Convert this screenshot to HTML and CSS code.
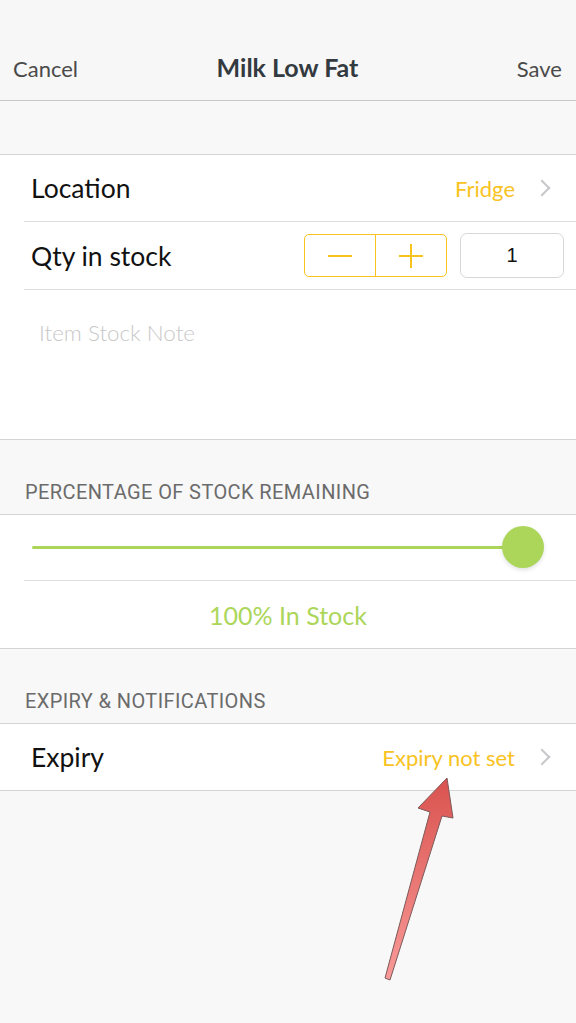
FILE: index.html
```html
<!DOCTYPE html>
<html lang="en">
<head>
  <meta charset="UTF-8" />
  <title>Milk Low Fat</title>
  <link rel="stylesheet" href="styles.css">
</head>
<body>

  <!-- Nav bar -->
  <div class="navbar">
    <span class="nav-btn">Cancel</span>
    <span class="nav-title">Milk Low Fat</span>
    <span class="nav-btn right">Save</span>
  </div>

  <div class="spacer"></div>

  <!-- Stock group -->
  <div class="group">
    <div class="row">
      <span class="label">Location</span>
      <span class="value">Fridge</span>
      <span class="chevron"></span>
    </div>
    <div class="row qty-row">
      <span class="label">Qty in stock</span>
      <div class="stepper">
        <span class="step"><span class="minus"></span></span>
        <span class="step"><span class="plus"></span></span>
      </div>
      <div class="qty-box">1</div>
    </div>
    <div class="note">Item Stock Note</div>
  </div>

  <div class="section-head">PERCENTAGE OF STOCK REMAINING</div>
  <div class="group">
    <div class="row slider-row">
      <div class="track"><span class="thumb"></span></div>
    </div>
    <div class="row stock-row">100% In Stock</div>
  </div>

  <div class="section-head">EXPIRY &amp; NOTIFICATIONS</div>
  <div class="group">
    <div class="row">
      <span class="label">Expiry</span>
      <span class="value">Expiry not set</span>
      <span class="chevron"></span>
    </div>
  </div>

  <!-- annotation arrow -->
  <svg class="arrow" width="576" height="1023" viewBox="0 0 576 1023">
    <defs>
      <linearGradient id="arrowFill" x1="0" y1="1" x2="0" y2="0">
        <stop offset="0" stop-color="#f99a98" />
        <stop offset="1" stop-color="#d9534f" />
      </linearGradient>
    </defs>
    <polygon points="447,778 453,818 442,816 390,980 385,978 430,812 418,808"
      fill="url(#arrowFill)" stroke="#7d5a5a" stroke-width="1" stroke-linejoin="round" />
  </svg>

</body>
</html>
```

FILE: styles.css
```css
body { margin: 0; background: #f8f8f8; font-family: Lato, "Open Sans", sans-serif; color: #1c1c1c; position: relative; min-height: 1023px; }

.navbar { height: 101px; box-sizing: border-box; border-bottom: 1px solid #c8c8c8; display: grid; grid-template-columns: 1fr auto 1fr; align-items: end; padding: 0 14px 18px 13px; background: #f7f7f7; }
.nav-btn { font-size: 22px; color: #4a4a4a; }
.nav-btn.right { text-align: right; }
.nav-title { font-size: 25px; font-weight: bold; color: #333a40; }

.spacer { height: 53px; border-bottom: 1px solid #d4d4d4; }

.group { background: #fff; border-bottom: 1px solid #d4d4d4; padding-left: 24px; }
.row { height: 66px; display: flex; align-items: center; border-bottom: 1px solid #dedede; padding-right: 24px; }
.group .row:last-child { border-bottom: none; }

.label { font-size: 26.5px; flex: 1; color: #111; padding-left: 7px; }
.value { font-size: 22px; color: #f9c31f; margin-right: 21px; }
.chevron { width: 10px; height: 10px; border-top: 2px solid #c7c7cc; border-right: 2px solid #c7c7cc; transform: rotate(45deg); margin-right: 4px; }

.qty-row { height: 67px; padding-right: 12px; }
.stepper { display: flex; width: 143px; height: 43px; border: 1px solid #f9c31f; border-radius: 5px; box-sizing: border-box; }
.step { flex: 1; display: flex; align-items: center; justify-content: center; position: relative; }
.step + .step { border-left: 1px solid #f9c31f; }
.minus, .plus { width: 24px; height: 2px; background: #f9c31f; position: relative; }
.plus::after { content: ""; position: absolute; left: 11px; top: -11px; width: 2px; height: 24px; background: #f9c31f; }
.qty-box { width: 104px; height: 45px; margin-left: 13px; border: 1px solid #d8d8d8; border-radius: 7px; box-sizing: border-box; display: flex; align-items: center; justify-content: center; font-family: "Liberation Sans", Arial, sans-serif; font-size: 20px; color: #111; }

.note { height: 149px; padding: 29px 0 0 15px; box-sizing: border-box; font-size: 22.4px; font-weight: 300; color: #c8c8c8; }

.section-head { height: 75px; box-sizing: border-box; padding: 0 0 10px 25px; display: flex; align-items: flex-end; font-family: Roboto, "Liberation Sans", sans-serif; font-size: 20px; letter-spacing: 0.4px; color: #6b6b6b; border-bottom: 1px solid #d4d4d4; }

.slider-row { height: 65px; padding-right: 53px; }
.track { flex: 1; height: 3px; margin-left: 8px; background: #acd65a; border-radius: 2px; position: relative; }
.thumb { position: absolute; right: -21px; top: -20px; width: 42px; height: 42px; border-radius: 50%; background: #acd65a; box-shadow: 0 2px 4px rgba(0,0,0,0.12); }

.stock-row { height: 67px; justify-content: center; padding-right: 24px; font-size: 25px; color: #acd65a; }

.arrow { position: absolute; left: 0; top: 0; pointer-events: none; }
```
